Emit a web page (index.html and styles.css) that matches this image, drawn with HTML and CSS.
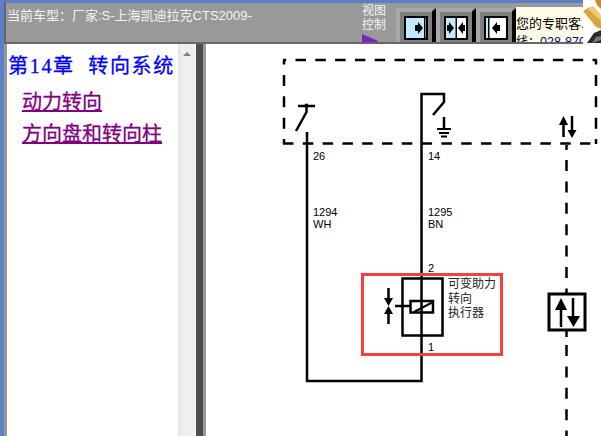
FILE: index.html
```html
<!DOCTYPE html>
<html>
<head>
    <title>电路图</title>
    <link rel="stylesheet" href="styles.css">
</head>
<body>
    <div class="app">
        <div class="topbar">
            <div class="car-info">当前车型：厂家:S-上海凯迪拉克CTS2009-</div>
            <div class="view-label">
                <div>视图</div>
                <div>控制</div>
                <svg class="view-flag" width="18" height="8" viewBox="0 0 18 8"><polygon points="1,0 17,7 17,8 1,8" fill="#7a22c8"/></svg>
            </div>
            <div class="tool-group">
                <div class="tool-cell">
                    <div class="tool-face">
                        <svg width="24" height="24" viewBox="0 0 24 24">
                            <rect x="0" y="0" width="24" height="24" fill="#fff"/>
                            <rect x="2" y="2" width="18" height="20" fill="#bfeaff"/>
                            <rect x="20" y="1" width="1.5" height="22" fill="#000"/>
                            <rect x="11" y="9" width="3" height="6" fill="#000"/>
                            <polygon points="14,6 19,12 14,18" fill="#000"/>
                            <rect x="1" y="1" width="22" height="22" fill="none" stroke="#000" stroke-width="2"/>
                        </svg>
                    </div>
                    <div class="tool-edge"></div>
                </div>
                <div class="tool-cell">
                    <div class="tool-face">
                        <svg width="24" height="24" viewBox="0 0 24 24">
                            <rect x="0" y="0" width="24" height="24" fill="#fff"/>
                            <rect x="2" y="2" width="10" height="20" fill="#bfeaff"/>
                            <rect x="11.5" y="1" width="1.5" height="22" fill="#000"/>
                            <rect x="3" y="9" width="2" height="6" fill="#000"/>
                            <polygon points="5,6 10,12 5,18" fill="#000"/>
                            <rect x="19" y="9" width="2" height="6" fill="#000"/>
                            <polygon points="19,6 14,12 19,18" fill="#000"/>
                            <rect x="1" y="1" width="22" height="22" fill="none" stroke="#000" stroke-width="2"/>
                        </svg>
                    </div>
                    <div class="tool-edge"></div>
                </div>
                <div class="tool-cell">
                    <div class="tool-face">
                        <svg width="24" height="24" viewBox="0 0 24 24">
                            <rect x="0" y="0" width="24" height="24" fill="#fff"/>
                            <rect x="2" y="2" width="2" height="20" fill="#bfeaff"/>
                            <rect x="4" y="1" width="1.5" height="22" fill="#000"/>
                            <rect x="13" y="9" width="3" height="6" fill="#000"/>
                            <polygon points="13,6 8,12 13,18" fill="#000"/>
                            <rect x="1" y="1" width="22" height="22" fill="none" stroke="#000" stroke-width="2"/>
                        </svg>
                    </div>
                    <div class="tool-edge"></div>
                </div>
            </div>
            <div class="service">
                <div class="service-line">您的专职客.</div>
                <div class="service-line"><span class="service-pre">线：</span><span class="service-tel">028-870</span></div>
            </div>
            <div class="tool-logo">
                <svg width="18" height="44" viewBox="0 0 18 44">
                    <polygon points="0,11 7,7 18,20 18,29 13,27" fill="#d9a441"/>
                    <polygon points="5,9 10,6 18,15 18,21" fill="#f0c878"/>
                    <polygon points="12,0 18,0 18,9 14,5" fill="#c98a2c"/>
                    <polygon points="4,43 11,33 18,30 18,43" fill="#2a2a2a"/>
                    <polygon points="9,43 13,37 18,36 18,40" fill="#777"/>
                </svg>
            </div>
        </div>
        <div class="main">
            <div class="toc">
                <div class="toc-list">
                    <div class="toc-title">第14章&nbsp;&nbsp;转向系统</div>
                    <a class="toc-link" href="#">动力转向</a>
                    <a class="toc-link" href="#">方向盘和转向柱</a>
                </div>
                <div class="scrollbar"><span class="scroll-up"></span></div>
            </div>
            <div class="splitter"></div>
            <div class="diagram">
                <svg width="395" height="392" viewBox="206 44 395 392">
                    <g fill="none" stroke="#000" stroke-width="2.5">
                        <!-- dashed module outline -->
                        <line class="dash-h" x1="283" y1="60" x2="597" y2="60" stroke-dashoffset="7.3"/>
                        <line class="dash-h" x1="283" y1="143.500" x2="597" y2="143.500"/>
                        <line class="dash-v" x1="284" y1="60" x2="284" y2="144" stroke-dashoffset="6.5"/>
                        <line class="dash-v" x1="596" y1="60" x2="596" y2="144" stroke-dashoffset="6.5"/>

                        <!-- dashed line down to the sensor -->
                        <line x1="566.500" y1="145" x2="566.500" y2="150"/>
                        <line class="dash-v" x1="566.500" y1="160" x2="566.500" y2="293"/>
                        <line x1="566.500" y1="331" x2="566.500" y2="337"/>
                        <line class="dash-v" x1="566.500" y1="345" x2="566.500" y2="436"/>

                        <!-- wires -->
                        <path d="M307 132V381H421.500V94H444V102L433 115"/>
                        <path d="M298 106H315M306.500 106V112L296 131"/>
                        <path d="M444 117V129"/>
                        <path d="M437 129H451M439 133H449M441 136.500H447" stroke-width="2"/>

                        <!-- actuator -->
                        <rect x="402.500" y="278.500" width="40" height="57"/>
                        <rect x="410.500" y="301" width="22.500" height="11.500"/>
                        <path d="M414 312L433 302" stroke-width="2"/>
                        <path d="M395 306H410"/>
                        <path d="M388.500 288V298M388.500 314V324"/>

                        <!-- sensor box -->
                        <rect x="549" y="294" width="36" height="36" stroke-width="3"/>
                        <path d="M561 305V327M573 298V317"/>
                        <path d="M563.500 137V122M572 116V131"/>

                        <rect x="362.500" y="274.500" width="139" height="80" stroke="#f4403f" stroke-width="3"/>
                    </g>
                    <g fill="#000">
                        <circle cx="306.500" cy="105.500" r="2"/>
                        <polygon points="384,298 393,298 388.500,306"/>
                        <polygon points="384,314 393,314 388.500,306"/>
                        <polygon points="555,310 567,310 561,298"/>
                        <polygon points="567,316 580,316 573.500,327"/>
                        <polygon points="559,125 568,125 563.500,116"/>
                        <polygon points="567.500,130 576.500,130 572,138"/>
                    </g>
                    <g class="wire-text">
                        <text x="313" y="160">26</text>
                        <text x="428" y="160">14</text>
                        <text x="313" y="216">1294</text>
                        <text x="313" y="228">WH</text>
                        <text x="428" y="216">1295</text>
                        <text x="428" y="228">BN</text>
                        <text x="428" y="272">2</text>
                        <text x="428" y="351">1</text>
                    </g>
                    <g class="part-text">
                        <text x="448" y="288">可变助力</text>
                        <text x="448" y="303">转向</text>
                        <text x="448" y="317">执行器</text>
                    </g>
                </svg>
            </div>
        </div>
    </div>
</body>
</html>
```

FILE: styles.css
```css
html, body {
    margin: 0;
    padding: 0;
    overflow: hidden;
    background-color: #ffffff;
}
.app {
    width: 601px;
    height: 436px;
    display: flex;
    flex-direction: column;
    font-family: "Liberation Sans", "Noto Sans CJK SC", sans-serif;
}

/* top bar */
.topbar {
    height: 44px;
    flex: none;
    display: flex;
    box-sizing: border-box;
    border-left: 4px solid #5b80c8;
    background-color: #999999;
}
.car-info {
    width: 354px;
    box-sizing: border-box;
    padding: 5px 0 0 1px;
    border-top: 3px solid #5b80c8;
    border-left: 2px solid #666;
    border-bottom: 2px solid #666;
    font-size: 13px;
    line-height: 16px;
    color: #f4f4f4;
    white-space: nowrap;
}
.view-label {
    width: 38px;
    box-sizing: border-box;
    border-top: 3px solid #5b80c8;
    border-bottom: 2px solid #666;
    padding: 1px 0 0 4px;
    font-size: 12px;
    line-height: 14px;
    color: #f4f4f4;
    position: relative;
}
.view-flag {
    position: absolute;
    left: 3px;
    bottom: 0;
}
.tool-group {
    display: flex;
    box-sizing: border-box;
    border-top: 3px solid #5b80c8;
    border-bottom: 2px solid #666;
    padding-top: 5px;
}
.tool-cell {
    width: 40px;
    display: flex;
}
.tool-face {
    width: 36px;
    box-sizing: border-box;
    padding: 4px 0 0 4px;
    border-top: 4px solid #a8a8a8;
    border-left: 4px solid #a8a8a8;
    background-color: #808080;
}
.tool-face svg {
    display: block;
}
.tool-edge {
    width: 4px;
    background-color: #000000;
    clip-path: polygon(0 10%, 100% 0, 100% 100%, 0 100%);
}
.service {
    width: 67px;
    box-sizing: border-box;
    border-top: 3px solid #5b80c8;
    border-bottom: 2px solid #666;
    overflow: hidden;
    background-color: #fffde8;
    box-shadow: inset 0 4px 0 #999999;
    padding-top: 12px;
    font-size: 13px;
    color: #000000;
    white-space: nowrap;
}
.service-line {
    height: 18px;
    line-height: 18px;
}
.service-pre {
    font-size: 12px;
}
.service-tel {
    color: #000080;
    font-size: 12.500px;
}
.tool-logo {
    width: 18px;
    background-color: #ffffff;
}
.tool-logo svg {
    display: block;
}

/* lower part */
.main {
    flex: 1;
    min-height: 0;
    display: flex;
    border-left: 4px solid #5b80c8;
}
.toc {
    width: 192px;
    flex: none;
    box-sizing: border-box;
    display: flex;
    border-left: 3px solid #999999;
    background-color: #ffffff;
}
.toc-list {
    width: 171px;
    flex: none;
    display: flex;
    flex-direction: column;
    align-items: flex-start;
    padding: 7px 0 0 1px;
    box-sizing: border-box;
}
.toc-title {
    margin-bottom: 3px;
    font-family: "Liberation Serif", "Noto Sans CJK SC", serif;
    font-size: 20px;
    line-height: 30px;
    color: #0000ff;
    letter-spacing: 1.700px;
    white-space: nowrap;
    -webkit-text-stroke: 0.3px #0000ff;
}
.toc-link {
    margin: 4px 0 0 14px;
    font-size: 20px;
    line-height: 28px;
    color: #800080;
    white-space: nowrap;
    -webkit-text-stroke: 0.3px #800080;
}
.scrollbar {
    width: 18px;
    flex: none;
    background: linear-gradient(to right, #e4e4e4, #f0f0f0 30%, #eeeeee);
    border-right: 1px solid #ffffff;
    display: flex;
    justify-content: center;
    padding-top: 8px;
    box-sizing: border-box;
}
.scroll-up {
    width: 0;
    height: 0;
    border-left: 4px solid transparent;
    border-right: 4px solid transparent;
    border-bottom: 4px solid #808080;
}
.splitter {
    width: 10px;
    flex: none;
    box-sizing: border-box;
    background-color: #4d4d4d;
    border-right: 3px solid #999999;
}
.diagram {
    flex: 1;
    min-width: 0;
    background-color: #ffffff;
}
.diagram svg {
    display: block;
}
.dash-h {
    stroke-dasharray: 10.500 9.300;
}
.dash-v {
    stroke-dasharray: 11 10.400;
}
.wire-text text {
    font-family: "Liberation Sans", sans-serif;
    font-size: 11px;
    fill: #000000;
}
.part-text text {
    font-family: "Noto Sans CJK SC", sans-serif;
    font-size: 12px;
    fill: #222222;
}
```
